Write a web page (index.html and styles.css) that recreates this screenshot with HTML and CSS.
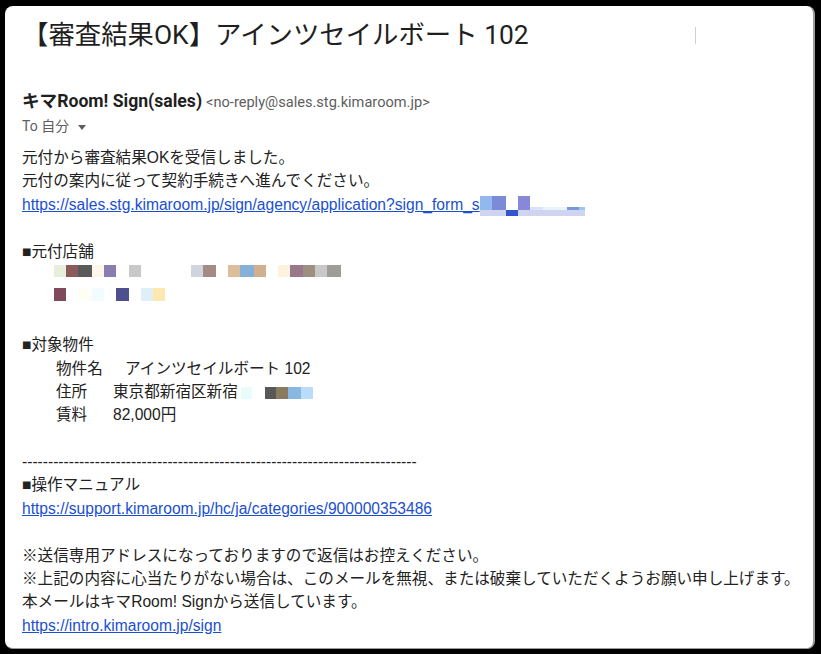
FILE: index.html
```html
<!DOCTYPE html>
<html lang="ja">
  <head>
    <meta charset="UTF-8" />
    <meta name="viewport" content="width=device-width, initial-scale=1.0" />
    <title>審査結果OK</title>
    <link rel="stylesheet" href="styles.css">
  </head>
  <body>
    <div class="mail">
      <div class="subject-row">
        <h1 class="subject">【審査結果OK】アインツセイルボート 102</h1>
        <span class="divider"></span>
      </div>

      <div class="sender">
        <span class="sender-name">キマRoom! Sign(sales)</span>
        <span class="sender-addr">&lt;no-reply@sales.stg.kimaroom.jp&gt;</span>
      </div>
      <div class="to">To 自分 <span class="caret"></span></div>

      <div class="body">
        <div class="line">元付から審査結果OKを受信しました。</div>
        <div class="line">元付の案内に従って契約手続きへ進んでください。</div>
        <div class="line"><a href="#">https://sales.stg.kimaroom.jp/sign/agency/application?sign_form_s</a><span class="mask mask-link"></span></div>
        <div class="line"></div>
        <div class="line">■元付店舗</div>
        <div class="line mosaic-row"><span class="mask mask-shop1"></span></div>
        <div class="line mosaic-row"><span class="mask mask-shop2"></span></div>
        <div class="line"></div>
        <div class="line">■対象物件</div>
        <div class="line item"><span class="label">物件名</span><span class="value wide">アインツセイルボート 102</span></div>
        <div class="line item"><span class="label">住所</span><span class="value">東京都新宿区新宿<span class="mask mask-addr"></span></span></div>
        <div class="line item"><span class="label">賃料</span><span class="value">82,000円</span></div>
        <div class="line"></div>
        <div class="line">----------------------------------------------------------------------------</div>
        <div class="line">■操作マニュアル</div>
        <div class="line"><a href="#">https://support.kimaroom.jp/hc/ja/categories/900000353486</a></div>
        <div class="line"></div>
        <div class="line">※送信専用アドレスになっておりますので返信はお控えください。</div>
        <div class="line">※上記の内容に心当たりがない場合は、このメールを無視、または破棄していただくようお願い申し上げます。</div>
        <div class="line">本メールはキマRoom! Signから送信しています。</div>
        <div class="line"><a href="#">https://intro.kimaroom.jp/sign</a></div>
      </div>
    </div>
  </body>
</html>
```

FILE: styles.css
```css
html, body {
  margin: 0;
  height: 100%;
}
body {
  background-color: #000;
  padding: 6px 6px 5px 5px;
  box-sizing: border-box;
}
.mail {
  height: 100%;
  box-sizing: border-box;
  background-color: #fff;
  border-radius: 8px;
  border-right: 2px solid #9a9a9a;
  border-bottom: 1px solid #9a9a9a;
  padding: 13px 0 0 17px;
  overflow: hidden;
}
.subject-row {
  display: flex;
  justify-content: space-between;
  align-items: center;
  width: 674px;
}
.subject {
  margin: 0;
  font-family: Roboto, "Noto Sans CJK JP", sans-serif;
  font-weight: 400;
  font-size: 26.4px;
  line-height: 32px;
  color: #1f1f1f;
}
.divider {
  width: 1px;
  height: 17px;
  background-color: #d0d0d0;
}
.sender {
  margin-top: 40px;
  line-height: 20px;
  font-family: Roboto, "Noto Sans CJK JP", sans-serif;
  color: #1f1f1f;
}
.sender-name {
  font-weight: 700;
  font-size: 17.6px;
}
.sender-addr {
  font-size: 14.6px;
  color: #5e5e5e;
}
.to {
  margin-top: 4px;
  line-height: 20px;
  font-family: Roboto, "Noto Sans CJK JP", sans-serif;
  font-size: 14px;
  color: #5e5e5e;
}
.caret {
  display: inline-block;
  margin-left: 5px;
  vertical-align: middle;
  border-left: 4.5px solid transparent;
  border-right: 4.5px solid transparent;
  border-top: 5px solid #5e5e5e;
}
.body {
  margin-top: 10px;
  font-family: "Liberation Sans", "Noto Sans CJK JP", sans-serif;
  font-size: 15.6px;
  color: #222;
}
.line {
  height: 23.4px;
  line-height: 23.4px;
  white-space: nowrap;
}
.body a {
  color: #1a4fcf;
  text-decoration: underline;
}
.item {
  padding-left: 34px;
  display: flex;
}
.label {
  width: 57px;
}
.value.wide {
  margin-left: 12px;
}
.mask {
  display: inline-block;
  vertical-align: middle;
}
.mosaic-row {
  padding-left: 32px;
  box-sizing: border-box;
}
.mosaic-row .mask {
  vertical-align: top;
  margin-top: 2px;
}
.mask-shop1 {
  width: 287px;
  height: 12px;
  background: linear-gradient(to right,
    #e8eedc 0 12px, #8b5a5a 12px 24px, #5a5a5a 24px 38px, #fdf6ea 38px 50px,
    #8a7db0 50px 62px, #fff 62px 75px, #c8c8c8 75px 87px, #fff 87px 137px,
    #d0d4dc 137px 149px, #a58b85 149px 162px, #fff 162px 174px, #dbbf9a 174px 186px,
    #85b0d8 186px 200px, #d1b090 200px 212px, #fff 212px 224px, #fdf3dc 224px 236px,
    #98788a 236px 249px, #9e9080 249px 261px, #c8c8c8 261px 273px, #9e9d98 273px 287px);
}
.mask-shop2 {
  width: 111px;
  height: 13px;
  background: linear-gradient(to right,
    #7e4a5c 0 12px, #fff 12px 24px, #fefef5 24px 38px, #f0fcfe 38px 50px,
    #fff 50px 62px, #4f4f8e 62px 75px, #fff 75px 87px, #e0eef8 87px 99px,
    #fde9b0 99px 111px);
}
.mask-link {
  width: 105px;
  height: 20px;
  background:
    linear-gradient(to right,
      #92b8ee 0 12px, #7b8bd8 12px 26px, #fff 26px 38px, #8888d8 38px 50px, #fff 50px 105px)
      0 0 / 100% 11px no-repeat,
    linear-gradient(to right,
      #92b8ee 0 12px, #7b8bd8 12px 26px, #fff 26px 38px, #8888d8 38px 50px,
      #dde3f6 50px 63px, #e8f4fa 63px 87px, #7b95dd 87px 99px, #9bc8ee 99px 105px)
      0 11px / 100% 3px no-repeat,
    linear-gradient(to right,
      #cfd5f0 0 26px, #3355cc 26px 38px, #cfd5f0 38px 105px)
      0 14px / 100% 6px no-repeat;
}
.mask-addr {
  width: 72px;
  height: 12px;
  margin-left: 3px;
  background: linear-gradient(to right,
    #e8fcfc 0 11px, #fff 11px 24px, #585858 24px 35px, #8a7a60 35px 47px,
    #88b8e0 47px 60px, #b8dcfa 60px 72px);
}
```
